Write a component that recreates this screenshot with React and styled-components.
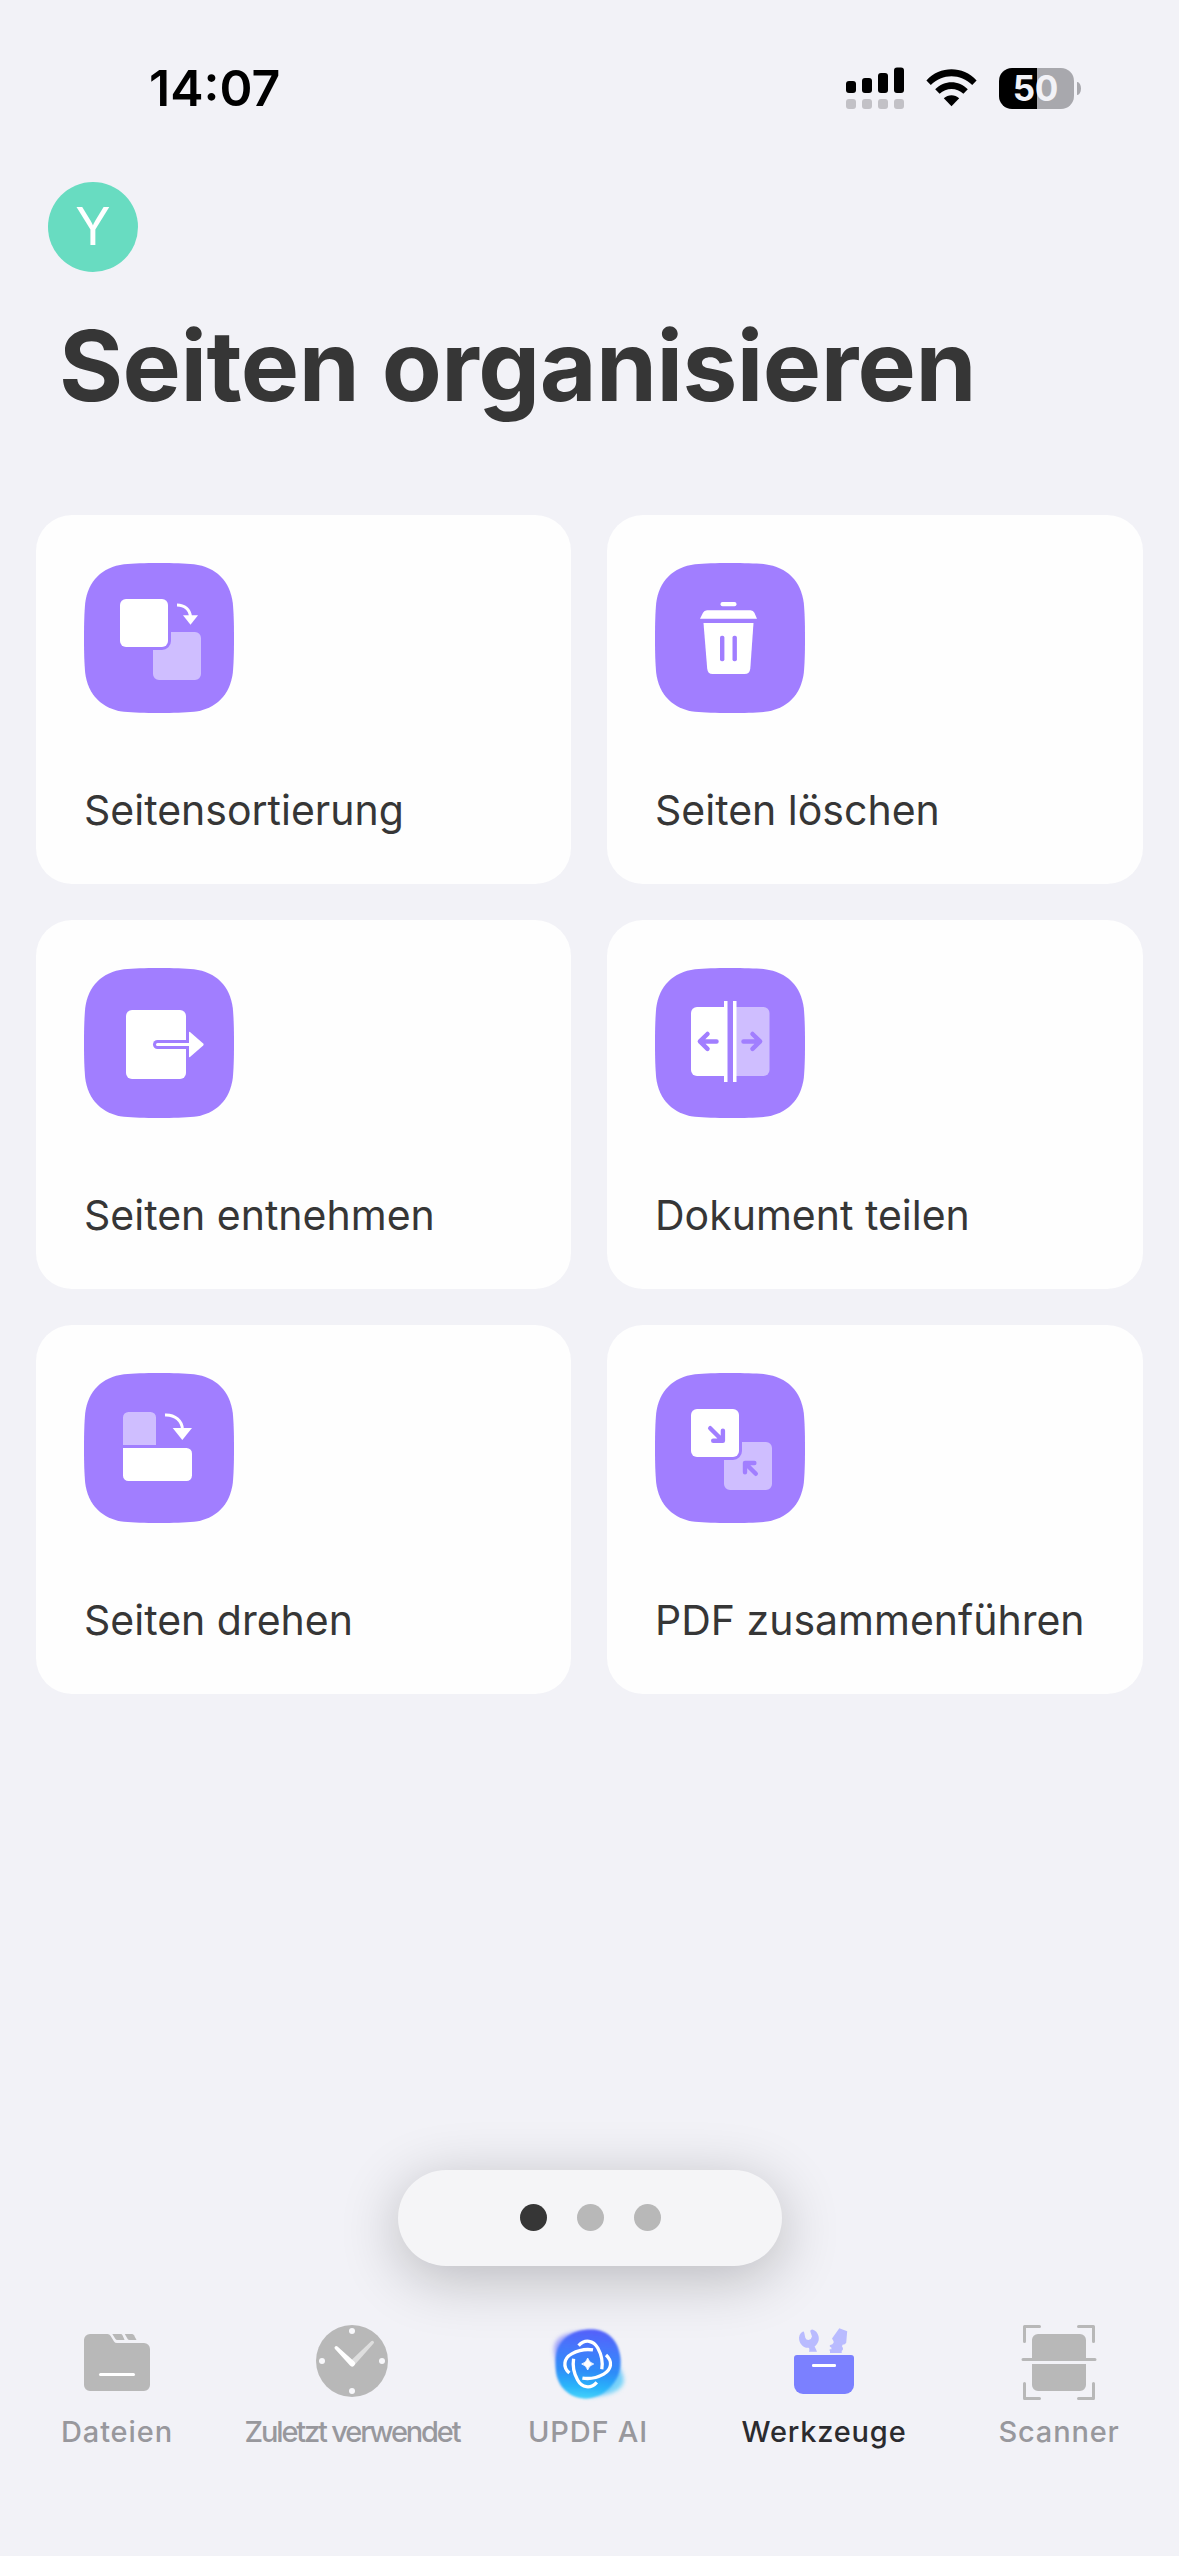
import React from "react";
import styled, { ThemeProvider, createGlobalStyle } from "styled-components";

const theme = {
  bg: "#f2f2f7",
  card: "#fefefe",
  text: "#363636",
  purple: "#a17eff",
  lilac: "#cfbeff",
  grey: "#b8b8b8",
  label: "#98989d",
  active: "#2b2b2f",
};

const GlobalStyle = createGlobalStyle`
  body {
    margin: 0;
    background: ${theme.bg};
    font-family: Inter, "Liberation Sans", sans-serif;
  }

  svg {
    display: block;
  }
`;

const Screen = styled.div`
  display: flex;
  flex-direction: column;
  width: 1179px;
  height: 2556px;
  overflow: hidden;
  background: ${props => props.theme.bg};
`;

const StatusBar = styled.div`
  display: flex;
  align-items: center;
  justify-content: space-between;
  box-sizing: border-box;
  height: 176px;
  padding: 0 98px 0 149px;
`;

const Time = styled.span`
  font-size: 50px;
  font-weight: 600;
  letter-spacing: 0;
  color: #000;
`;

const StatusIcons = styled.div`
  display: flex;
  align-items: center;
  gap: 22px;
`;

const Battery = styled.div`
  display: flex;
  align-items: center;
  gap: 3px;
`;

const BatteryBody = styled.div`
  display: flex;
  align-items: center;
  justify-content: center;
  box-sizing: border-box;
  width: 75px;
  height: 41px;
  padding-right: 2px;
  border-radius: 13px;
  background: linear-gradient(90deg, #000 50.5%, #a8a8ad 50.5%);
  font-size: 35px;
  font-weight: 700;
  line-height: 41px;
  letter-spacing: -0.2px;
  color: ${props => props.theme.bg};
`;

const BatteryTip = styled.div`
  width: 4px;
  height: 13px;
  border-radius: 0 4px 4px 0 / 0 7px 7px 0;
  background: #a8a8ad;
`;

const Header = styled.header`
  display: flex;
  flex-direction: column;
  height: 339px;
`;

const Avatar = styled.div`
  width: 90px;
  height: 90px;
  margin: 6px 0 0 48px;
  border-radius: 50%;
  background: #68dcc1;
  font-size: 52px;
  font-weight: 400;
  line-height: 90px;
  text-align: center;
  color: #fff;
`;

const Title = styled.h1`
  margin: 34px 0 0 59px;
  font-size: 98px;
  font-weight: 700;
  line-height: 120px;
  letter-spacing: -0.55px;
  color: ${props => props.theme.text};
`;

const Grid = styled.main`
  display: grid;
  grid-template-columns: 535px 536px;
  grid-auto-rows: 369px;
  gap: 36px;
  padding: 0 36px;
`;

const Card = styled.div`
  display: flex;
  flex-direction: column;
  justify-content: space-between;
  box-sizing: border-box;
  padding: 48px 0 44px 48px;
  border-radius: 36px;
  background: ${props => props.theme.card};
`;

const CardLabel = styled.span`
  font-size: 41px;
  line-height: 60px;
  white-space: nowrap;
  color: ${props => props.theme.text};
`;

const Pager = styled.div`
  display: flex;
  align-items: center;
  justify-content: center;
  gap: 30px;
  box-sizing: border-box;
  width: 384px;
  height: 96px;
  margin: auto 0 50px 398px;
  padding-bottom: 1px;
  border-radius: 48px;
  background: #f5f5f7;
  box-shadow: 0 12px 60px rgba(0, 0, 0, 0.24);
`;

const Dot = styled.span`
  width: 27px;
  height: 27px;
  border-radius: 50%;
  background: ${props => (props.$active ? "#363636" : "#b8b8b8")};
`;

const TabBar = styled.nav`
  display: grid;
  grid-template-columns: 234px 236px 236px 236px 234px;
  height: 240px;
`;

const Tab = styled.div`
  display: flex;
  flex-direction: column;
  align-items: center;
  gap: 6px;
`;

const TabLabel = styled.span`
  font-size: 29px;
  font-weight: 500;
  line-height: 40px;
  letter-spacing: ${props => props.$spacing};
  white-space: nowrap;
  color: ${props => (props.$active ? props.theme.active : props.theme.label)};
`;

const Signal = () => (
  <svg width="58" height="42" viewBox="0 0 58 42">
    <rect x="0" y="14" width="10" height="12" rx="3" />
    <rect x="16" y="11" width="10" height="15" rx="3" />
    <rect x="32" y="6" width="10" height="20" rx="3" />
    <rect x="48" y="0.6" width="10" height="25.4" rx="3" />
    {[0, 16, 32, 48].map(x => (
      <rect key={x} x={x} y="32" width="10" height="10" rx="3" fill="#c2c1c6" />
    ))}
  </svg>
);

const Wifi = () => (
  <svg width="51" height="38" viewBox="0 0 51 38">
    <path d="M0.4 11.4C14-3.4 37-3.4 50.6 11.4L46.2 16C34.6 4.2 16.4 4.2 4.8 16Z" />
    <path d="M9.2 20.2C18.2 10.8 32.8 10.8 41.8 20.2L37.4 24.7C30.6 18.4 20.4 18.4 13.6 24.7Z" />
    <path d="M17.8 29.2C22.2 25.2 28.8 25.2 33.2 29.2L25.5 37.2Z" />
  </svg>
);

// rounded "squircle" tile behind every tool icon
const Tile = ({ children }) => (
  <svg width="150" height="150" viewBox="0 0 150 150">
    <path
      fill={theme.purple}
      d="M0 75C0 60 .3 50 1.2 40C4 18 18 4 40 1.2C50 .3 60 0 75 0S100 .3 110 1.2C132 4 146 18 148.8 40C149.7 50 150 60 150 75S149.7 100 148.8 110C146 132 132 146 110 148.8C100 149.7 90 150 75 150S50 149.7 40 148.8C18 146 4 132 1.2 110C.3 100 0 90 0 75Z"
    />
    {children}
  </svg>
);

const BackPage = () => (
  <path
    fill={theme.lilac}
    d="M87 69H111a6 6 0 0 1 6 6V111a6 6 0 0 1-6 6H75a6 6 0 0 1-6-6V87H78a9 9 0 0 0 9-9Z"
  />
);

const SortIcon = () => (
  <Tile>
    <rect x="36" y="36" width="48" height="48" rx="6" fill="#fff" />
    <BackPage />
    <path d="M93 42C100.500 42 106 46.500 106.500 54" fill="none" stroke="#fff" strokeWidth="3" />
    <path d="M99 52.300H114L106.500 61.700Z" fill="#fff" />
  </Tile>
);

const DeleteIcon = () => (
  <Tile>
    <rect x="65.5" y="39" width="16" height="4.300" rx="2" fill="#fff" />
    <path d="M52 47.300H95.500Q98.300 47.300 99.400 49.800L102 55.700H45L48 49.800Q49.200 47.300 52 47.300Z" fill="#fff" />
    <path d="M48.500 60H98.500L95.300 105.500Q94.800 111 89.500 111H57.500Q52.700 111 52.200 105.500Z" fill="#fff" />
    <rect x="65" y="72.700" width="4.400" height="25.600" rx="1.800" fill={theme.purple} />
    <rect x="77.500" y="72.700" width="4.400" height="25.600" rx="1.800" fill={theme.purple} />
  </Tile>
);

const ExtractIcon = () => (
  <Tile>
    <rect x="42" y="42" width="60" height="69" rx="6" fill="#fff" />
    <path d="M102 72H73.500a4.500 4.500 0 0 0 0 9H102Z" fill={theme.purple} />
    <path d="M106 75H73.500a1.500 1.500 0 0 0 0 3H106Z" fill="#fff" />
    <path d="M105 64.500Q105 63.300 106 64.100L119.200 75.500Q120.200 76.500 119.200 77.500L106 88.900Q105 89.700 105 88.500Z" fill="#fff" />
  </Tile>
);

const SplitIcon = () => (
  <Tile>
    <path d="M72 39H42a6 6 0 0 0-6 6V102a6 6 0 0 0 6 6H72Z" fill="#fff" />
    <path d="M81 39H108.500a6 6 0 0 1 6 6V102a6 6 0 0 1-6 6H81Z" fill={theme.lilac} />
    <rect x="69" y="33" width="3.500" height="81" fill="#fff" />
    <rect x="78" y="33" width="3.500" height="81" fill="#fff" />
    <g fill="none" stroke={theme.purple} strokeWidth="4.500" strokeLinecap="round" strokeLinejoin="round">
      <path d="M61.500 73.400H45M52.500 66L44.900 73.400L52.500 80.900" />
      <path d="M88.500 73.400H105M97.500 66L105.100 73.400L97.500 80.900" />
    </g>
  </Tile>
);

const RotateIcon = () => (
  <Tile>
    <path d="M39 72V44.500a5.500 5.500 0 0 1 5.500-5.500H66.500a5.500 5.500 0 0 1 5.500 5.500V72Z" fill={theme.lilac} />
    <path d="M39 75H102.500a5.500 5.500 0 0 1 5.500 5.500V102.500a5.500 5.500 0 0 1-5.500 5.500H44.500a5.500 5.500 0 0 1-5.500-5.500Z" fill="#fff" />
    <path d="M81 42C91 41.500 98.500 48 98.500 57" fill="none" stroke="#fff" strokeWidth="3" />
    <path d="M88.700 55H108L98.300 67Z" fill="#fff" />
  </Tile>
);

const MergeIcon = () => (
  <Tile>
    <rect x="36" y="36" width="48" height="48" rx="6" fill="#fff" />
    <BackPage />
    <g fill="none" stroke={theme.purple} strokeWidth="4.400" strokeLinecap="round" strokeLinejoin="round">
      <path d="M55.200 55.200L67 67M67.900 57.600V67.800H58.200" />
      <path d="M100.800 100.800L90 90M99.400 90H90V99.200" />
    </g>
  </Tile>
);

const FilesIcon = () => (
  <svg width="90" height="90" viewBox="0 0 90 90" fill={theme.grey}>
    <path d="M18 18H35.500Q37.500 18 38.500 19.700L42 25.500Q43 27 45 27H72a6 6 0 0 1 6 6V69a6 6 0 0 1-6 6H18a6 6 0 0 1-6-6V24a6 6 0 0 1 6-6Z" />
    <path d="M40.300 18H48.500Q50 18 50.500 19.200L52.600 24H45.500Q44 24 43.300 22.800Z" />
    <path d="M52.800 18H59.700Q61.300 18 62 19.200L64.500 24H57.500Q56.200 24 55.500 22.800Z" />
    <rect x="27" y="57" width="36" height="3" rx="1.500" fill="#fff" />
  </svg>
);

const ClockIcon = () => (
  <svg width="90" height="90" viewBox="0 0 90 90">
    <circle cx="45" cy="45" r="36" fill={theme.grey} />
    <g fill="#f8f8fb">
      <circle cx="45" cy="15" r="3" />
      <circle cx="15" cy="45" r="3" />
      <circle cx="75" cy="45" r="3" />
      <circle cx="45" cy="75" r="3" />
    </g>
    <path d="M64.200 25.200a1.600 1.600 0 0 1 2.300 2.300L47.600 49L43.500 45Z" fill="#dedede" />
    <path d="M28 33a1.700 1.700 0 0 1 2.500-2.400L47.200 45.600a2.900 2.900 0 0 1-4.200 4Z" fill="#fff" />
  </svg>
);

const AiIcon = () => (
  <svg width="90" height="90" viewBox="0 0 90 90">
    <defs>
      <linearGradient id="ai" x1="0.500" y1="0" x2="0.420" y2="1">
        <stop offset="0" stopColor="#5560fa" />
        <stop offset="0.300" stopColor="#4379fb" />
        <stop offset="0.600" stopColor="#2d8df8" />
        <stop offset="0.850" stopColor="#2cb6fa" />
        <stop offset="1" stopColor="#45d3fa" />
      </linearGradient>
      <linearGradient id="halo" x1="0" y1="0" x2="1" y2="1">
        <stop offset="0" stopColor="#8f83fa" stopOpacity="0.700" />
        <stop offset="0.500" stopColor="#4f8cff" stopOpacity="0.800" />
        <stop offset="1" stopColor="#50dff8" stopOpacity="0.750" />
      </linearGradient>
      <filter id="soft" x="-20%" y="-20%" width="140%" height="140%">
        <feGaussianBlur stdDeviation="2.200" />
      </filter>
      <filter id="edge">
        <feGaussianBlur stdDeviation="0.800" />
      </filter>
    </defs>
    <path
      d="M12 28C16 17 33 15 50 15C66 17 74 28 75 44C76 54 83 60 80 68C76 77 61 80 46 80.500C28 80 16 70 15 54C14 44 9 36 12 28Z"
      fill="url(#halo)"
      filter="url(#soft)"
    />
    <path
      d="M21 23C30 15 41 13 51 13.500C67 15 76 27 77.500 43C78 54 75 64 66 72.500C58 80 49 82.500 41 82.500C25 81 14 70 12.800 53C12 40 13 31 21 23Z"
      fill="url(#ai)"
      filter="url(#edge)"
    />
    {[0, 90, 180, 270].map(angle => (
      <path
        key={angle}
        d="M35.600 29.700C42 22.500 50.500 24.300 54.800 32C58.500 38.700 60 46 58.800 53.300"
        fill="none"
        stroke="#fff"
        strokeWidth="3.300"
        transform={`rotate(${angle} 44.700 48)`}
      />
    ))}
    <path d="M44.700 42Q46 46.700 50.700 48Q46 49.300 44.700 54Q43.400 49.300 38.700 48Q43.400 46.700 44.700 42Z" fill="#fff" stroke="#fff" strokeWidth="0.800" />
  </svg>
);

const ToolsIcon = () => (
  <svg width="90" height="90" viewBox="0 0 90 90">
    <g fill="#b9bbff">
      <path d="M24 15.600C20.800 17.500 19.500 20.500 20.200 24C21 28.500 25 32.300 29.500 31.800Q31 32.500 30 35.800H38Q37 33 35.600 30.400C39 28 40.500 24 39.500 20C38.500 16.500 36.500 14.300 33.500 13.400Q31 13.300 31.300 15.500L33 20.500Q32.500 23.500 29.500 24.100Q27 24 26.300 21.800L25.300 17Q25 15.500 24 15.600Z" />
      <path d="M60.300 12.300L68.200 15.200L67.200 26.800Q66.300 28.700 63.500 28.800L63 30.500Q65.300 33.300 62.700 35V37H51V35Q50 34.500 50.800 33.300H52.500L52.300 31.500Q50 30.500 50.800 29.300Q54 28.500 54.700 26.500Q54.500 24.500 53 22.500Z" />
    </g>
    <path d="M18 39H72a3 3 0 0 1 3 3V69a9 9 0 0 1-9 9H24a9 9 0 0 1-9-9V42a3 3 0 0 1 3-3Z" fill="#7b80ff" />
    <rect x="33" y="48" width="24" height="3" rx="1.300" fill="#fff" />
  </svg>
);

const ScannerIcon = () => (
  <svg width="90" height="90" viewBox="0 0 90 90">
    <path
      d="M10.500 25.500V10.500H25.500M64.500 10.500H79.500V25.500M79.500 67.500V82.500H64.500M25.500 82.500H10.500V67.500M9 43.500H81"
      fill="none"
      stroke={theme.grey}
      strokeWidth="3"
      strokeLinecap="round"
      strokeLinejoin="round"
    />
    <path d="M18 44V24a6 6 0 0 1 6-6H66a6 6 0 0 1 6 6V44ZM18 48H72V69a6 6 0 0 1-6 6H24a6 6 0 0 1-6-6Z" fill={theme.grey} />
  </svg>
);

const tools = [
  { label: "Seitensortierung", icon: SortIcon },
  { label: "Seiten löschen", icon: DeleteIcon },
  { label: "Seiten entnehmen", icon: ExtractIcon },
  { label: "Dokument teilen", icon: SplitIcon },
  { label: "Seiten drehen", icon: RotateIcon },
  { label: "PDF zusammenführen", icon: MergeIcon },
];

const tabs = [
  { label: "Dateien", icon: FilesIcon, spacing: "0.9px" },
  { label: "Zuletzt verwendet", icon: ClockIcon, spacing: "-2.15px" },
  { label: "UPDF AI", icon: AiIcon, spacing: "0.8px" },
  { label: "Werkzeuge", icon: ToolsIcon, spacing: "0.8px", active: true },
  { label: "Scanner", icon: ScannerIcon, spacing: "0.8px" },
];

const App = () => (
  <ThemeProvider theme={theme}>
    <GlobalStyle />
    <Screen>
      <StatusBar>
        <Time>14:07</Time>
        <StatusIcons>
          <Signal />
          <Wifi />
          <Battery>
            <BatteryBody>50</BatteryBody>
            <BatteryTip />
          </Battery>
        </StatusIcons>
      </StatusBar>
      <Header>
        <Avatar>Y</Avatar>
        <Title>Seiten organisieren</Title>
      </Header>
      <Grid>
        {tools.map(({ label, icon: Icon }) => (
          <Card key={label}>
            <Icon />
            <CardLabel>{label}</CardLabel>
          </Card>
        ))}
      </Grid>
      <Pager>
        <Dot $active />
        <Dot />
        <Dot />
      </Pager>
      <TabBar>
        {tabs.map(({ label, icon: Icon, spacing, active }) => (
          <Tab key={label}>
            <Icon />
            <TabLabel $spacing={spacing} $active={active}>
              {label}
            </TabLabel>
          </Tab>
        ))}
      </TabBar>
    </Screen>
  </ThemeProvider>
);

export default App;
